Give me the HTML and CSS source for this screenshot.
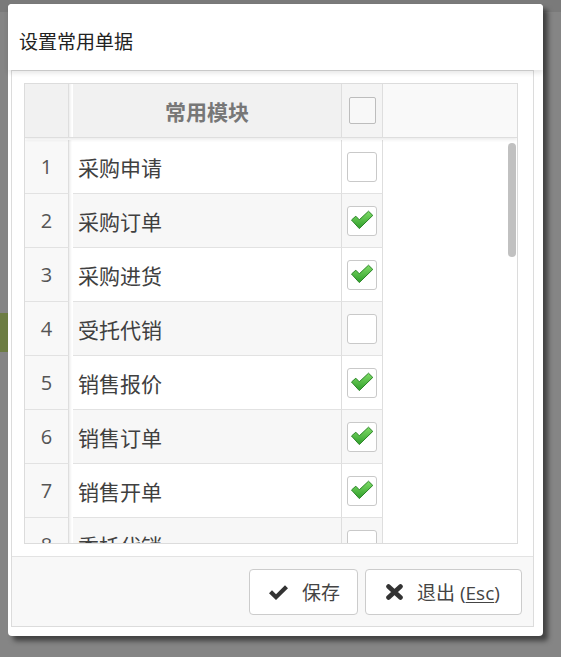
FILE: index.html
```html
<!DOCTYPE html>
<html lang="zh-CN">
<head>
<meta charset="utf-8">
<title>设置常用单据</title>
<link rel="stylesheet" href="styles.css">
</head>
<body>
<div class="dialog">
  <div class="dlg-header"><span class="dlg-title">设置常用单据</span></div>
  <div class="dlg-content">
    <div class="dlg-body">
      <div class="grid">
        <div class="grid-head">
          <div class="c-num"></div>
          <div class="c-gap"></div>
          <div class="c-mod">常用模块</div>
          <div class="c-chk"><span class="cb cb-head"></span></div>
          <div class="c-fill"></div>
        </div>
        <div class="grid-rows">
          <div class="row"><div class="c-num">1</div><div class="c-gap"></div><div class="c-mod">采购申请</div><div class="c-chk"><span class="cb"></span></div><div class="c-fill"></div></div>
          <div class="row alt"><div class="c-num">2</div><div class="c-gap"></div><div class="c-mod">采购订单</div><div class="c-chk"><span class="cb"><svg class="tick" viewBox="0 0 28 28"><defs><linearGradient id="g" x1="0" y1="0" x2="0" y2="1"><stop offset="0" stop-color="#7fdc66"/><stop offset="1" stop-color="#2f9e2b"/></linearGradient></defs><path d="M3.5 13 L7.8 9.2 L11.3 12.8 L20.5 4.2 L24.8 8.4 L11.3 21.6 Z" fill="url(#g)" stroke="#2a8526" stroke-width="1" stroke-linejoin="round"/></svg></span></div><div class="c-fill"></div></div>
          <div class="row"><div class="c-num">3</div><div class="c-gap"></div><div class="c-mod">采购进货</div><div class="c-chk"><span class="cb"><svg class="tick" viewBox="0 0 28 28"><path d="M3.5 13 L7.8 9.2 L11.3 12.8 L20.5 4.2 L24.8 8.4 L11.3 21.6 Z" fill="url(#g)" stroke="#2a8526" stroke-width="1" stroke-linejoin="round"/></svg></span></div><div class="c-fill"></div></div>
          <div class="row alt"><div class="c-num">4</div><div class="c-gap"></div><div class="c-mod">受托代销</div><div class="c-chk"><span class="cb"></span></div><div class="c-fill"></div></div>
          <div class="row"><div class="c-num">5</div><div class="c-gap"></div><div class="c-mod">销售报价</div><div class="c-chk"><span class="cb"><svg class="tick" viewBox="0 0 28 28"><path d="M3.5 13 L7.8 9.2 L11.3 12.8 L20.5 4.2 L24.8 8.4 L11.3 21.6 Z" fill="url(#g)" stroke="#2a8526" stroke-width="1" stroke-linejoin="round"/></svg></span></div><div class="c-fill"></div></div>
          <div class="row alt"><div class="c-num">6</div><div class="c-gap"></div><div class="c-mod">销售订单</div><div class="c-chk"><span class="cb"><svg class="tick" viewBox="0 0 28 28"><path d="M3.5 13 L7.8 9.2 L11.3 12.8 L20.5 4.2 L24.8 8.4 L11.3 21.6 Z" fill="url(#g)" stroke="#2a8526" stroke-width="1" stroke-linejoin="round"/></svg></span></div><div class="c-fill"></div></div>
          <div class="row"><div class="c-num">7</div><div class="c-gap"></div><div class="c-mod">销售开单</div><div class="c-chk"><span class="cb"><svg class="tick" viewBox="0 0 28 28"><path d="M3.5 13 L7.8 9.2 L11.3 12.8 L20.5 4.2 L24.8 8.4 L11.3 21.6 Z" fill="url(#g)" stroke="#2a8526" stroke-width="1" stroke-linejoin="round"/></svg></span></div><div class="c-fill"></div></div>
          <div class="row alt"><div class="c-num">8</div><div class="c-gap"></div><div class="c-mod">委托代销</div><div class="c-chk"><span class="cb"></span></div><div class="c-fill"></div></div>
          <div class="scroll-thumb"></div>
        </div>
      </div>
    </div>
    <div class="dlg-footer">
      <button class="btn btn-save" type="button">
        <svg class="ico ico-check" viewBox="0 0 19 15"><path d="M0 8.2 L3 5.2 L7 9.2 L16 0.2 L19 3.2 L7 15 Z" fill="#333"/></svg>
        <span>保存</span>
      </button>
      <button class="btn btn-exit" type="button">
        <svg class="ico ico-x" viewBox="0 0 17 16"><path d="M2.5 2.5 L14.5 13.5 M14.5 2.5 L2.5 13.5" stroke="#333" stroke-width="4.6" stroke-linecap="round"/></svg>
        <span>退出 (<u>Esc</u>)</span>
      </button>
    </div>
  </div>
</div>
</body>
</html>
```

FILE: styles.css
```css
html, body {
  margin: 0;
  padding: 0;
}
body {
  width: 561px;
  height: 657px;
  overflow: hidden;
  background:
    linear-gradient(#6d7d43, #6d7d43) no-repeat 0 313px / 8px 39px,
    linear-gradient(#7a7a7a, #7a7a7a) no-repeat 0 0 / 100% 12px,
    #858585;
  font-family: "Open Sans", "Noto Sans CJK SC", sans-serif;
  color: #333;
  padding-top: 4px;
  padding-left: 8px;
  box-sizing: border-box;
}
.dialog {
  width: 535px;
  height: 632px;
  background: #fff;
  border-radius: 4px;
  box-shadow: 5px 5px 5px rgba(0, 0, 0, 0.5);
  display: flex;
  flex-direction: column;
}
.dlg-header {
  height: 66px;
  box-sizing: border-box;
  padding: 27px 0 0 11px;
  position: relative;
  z-index: 2;
  box-shadow: 0 3px 5px rgba(0, 0, 0, 0.10);
  border-radius: 4px 4px 0 0;
  background: #fff;
}
.dlg-title {
  display: block;
  font-family: "Noto Sans CJK SC", sans-serif;
  font-size: 19px;
  line-height: 19px;
  color: #222;
}
.dlg-content {
  flex: 1;
  margin: 0 9px 9px 3px;
  border: 1px solid #dcdcdc;
  display: flex;
  flex-direction: column;
  min-height: 0;
}
.dlg-body {
  flex: 1;
  padding: 12px 15px 12px 12px;
  background: #fff;
  min-height: 0;
}
.grid {
  height: 461px;
  box-sizing: border-box;
  border: 1px solid #dcdcdc;
  display: flex;
  flex-direction: column;
  overflow: hidden;
}
.grid-head {
  display: flex;
  height: 54px;
  box-sizing: border-box;
  border-bottom: 1px solid #dedede;
  margin-bottom: 2px;
  box-shadow: 0 2px 3px rgba(0, 0, 0, 0.07);
  position: relative;
  z-index: 1;
  flex: none;
}
.c-num {
  width: 43px;
  flex: none;
  border-right: 1px solid #dedede;
  background: #f7f7f7;
  display: flex;
  align-items: center;
  justify-content: center;
  font-family: "Open Sans", sans-serif;
  font-size: 20px;
  color: #555;
}
.c-gap {
  width: 4px;
  flex: none;
  background: linear-gradient(to right, rgba(0, 0, 0, 0.07), rgba(0, 0, 0, 0) 3px), #fff;
}
.c-mod {
  width: 269px;
  flex: none;
  border-right: 1px solid #dedede;
  display: flex;
  align-items: center;
  padding-left: 5px;
  box-sizing: border-box;
  font-family: "Noto Sans CJK SC", sans-serif;
  font-size: 21px;
  color: #404040;
}
.c-chk {
  width: 40px;
  flex: none;
  border-right: 1px solid #dedede;
  display: flex;
  align-items: center;
  justify-content: center;
}
.c-fill {
  flex: 1;
  background: #fff;
}
.grid-head .c-num {
  background: #f1f1f1;
}
.grid-head .c-mod {
  background: #f1f1f1;
  justify-content: center;
  padding-left: 0;
  font-weight: bold;
  color: #777;
}
.grid-head .c-chk {
  background: #f4f4f4;
}
.grid-head .c-fill {
  background: #f9f9f9;
}
.grid-rows {
  flex: 1;
  position: relative;
  overflow: hidden;
}
.row {
  display: flex;
  height: 54px;
}
.row .c-num,
.row .c-mod,
.row .c-chk {
  border-bottom: 1px solid #e2e2e2;
}
.row .c-num {
  background: #f8f8f8;
}
.row.alt .c-mod,
.row.alt .c-chk {
  background: #f7f7f7;
}
.cb {
  width: 30px;
  height: 30px;
  box-sizing: border-box;
  border: 1px solid #c9c9c9;
  border-radius: 3px;
  background: #fff;
  display: block;
  position: relative;
}
.cb-head {
  width: 27px;
  height: 27px;
  border-color: #bdbdbd;
  border-radius: 2px;
  background: #f8f8f8;
}
.tick {
  display: block;
  width: 28px;
  height: 28px;
  margin: 0;
}
.scroll-thumb {
  position: absolute;
  top: 3px;
  right: 1px;
  width: 8px;
  height: 114px;
  border-radius: 4px;
  background: #c1c1c1;
}
.dlg-footer {
  height: 70px;
  box-sizing: border-box;
  border-top: 1px solid #e3e3e3;
  background: #f8f8f8;
  display: flex;
  justify-content: flex-end;
  align-items: flex-start;
  gap: 7px;
  padding: 12px 11px 0 0;
  flex: none;
}
.btn {
  height: 46px;
  box-sizing: border-box;
  border: 1px solid #cccccc;
  border-radius: 4px;
  background: #fff;
  display: flex;
  align-items: center;
  gap: 14px;
  padding: 0 0 0 19px;
  margin: 0;
  font-family: "Open Sans", "Noto Sans CJK SC", sans-serif;
  font-size: 19px;
  color: #444;
}
.btn u {
  text-decoration: underline;
  text-underline-offset: 2px;
}
.btn-save {
  width: 109px;
}
.btn-exit {
  width: 157px;
  padding-left: 20px;
}
.ico {
  display: block;
  flex: none;
}
.ico-check {
  width: 19px;
  height: 15px;
}
.ico-x {
  width: 17px;
  height: 16px;
}
```
